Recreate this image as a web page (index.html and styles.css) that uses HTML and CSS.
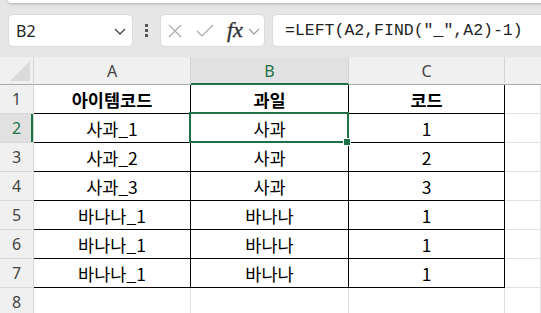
FILE: index.html
```html
<!DOCTYPE html>
<html lang="ko">
<head>
<meta charset="utf-8">
<link rel="stylesheet" href="styles.css">
</head>
<body>
<div class="top">
  <div class="ribbon"></div>
  <div class="bar">
    <div class="namebox">
      <span class="ref">B2</span>
      <svg class="chev" width="12" height="7" viewBox="0 0 12 7"><path d="M1 1 L6 6 L11 1" fill="none" stroke="#444" stroke-width="1.3"/></svg>
    </div>
    <div class="dots"><i></i><i></i><i></i></div>
    <div class="fxbox">
      <svg class="ico" width="14" height="14" viewBox="0 0 14 14"><path d="M1 1 L13 13 M13 1 L1 13" stroke="#aaa" stroke-width="1.2" fill="none"/></svg>
      <svg class="ico check" width="18" height="14" viewBox="0 0 18 14"><path d="M1 7 L6 12 L17 1" stroke="#aaa" stroke-width="1.2" fill="none"/></svg>
      <span class="fx">fx</span>
      <svg class="chev2" width="12" height="7" viewBox="0 0 12 7"><path d="M1 1 L6 6 L11 1" fill="none" stroke="#999" stroke-width="1.1"/></svg>
    </div>
    <div class="formula">=LEFT(A2,FIND("_",A2)-1)</div>
  </div>
</div>
<div class="sheet">
  <div class="corner"><span class="tri"></span></div>
  <div class="ch">A</div>
  <div class="ch sel">B</div>
  <div class="ch">C</div>
  <div class="ch last"></div>

  <div class="rh">1</div>
  <div class="c t b">아이템코드</div>
  <div class="c t b">과일</div>
  <div class="c t b">코드</div>
  <div class="c"></div>

  <div class="rh rsel">2</div>
  <div class="c t">사과_1</div>
  <div class="c t active">사과<span class="outline"></span><span class="handle"></span></div>
  <div class="c t">1</div>
  <div class="c"></div>

  <div class="rh">3</div>
  <div class="c t">사과_2</div>
  <div class="c t">사과</div>
  <div class="c t">2</div>
  <div class="c"></div>

  <div class="rh">4</div>
  <div class="c t">사과_3</div>
  <div class="c t">사과</div>
  <div class="c t">3</div>
  <div class="c"></div>

  <div class="rh">5</div>
  <div class="c t">바나나_1</div>
  <div class="c t">바나나</div>
  <div class="c t">1</div>
  <div class="c"></div>

  <div class="rh">6</div>
  <div class="c t">바나나_1</div>
  <div class="c t">바나나</div>
  <div class="c t">1</div>
  <div class="c"></div>

  <div class="rh">7</div>
  <div class="c t">바나나_1</div>
  <div class="c t">바나나</div>
  <div class="c t">1</div>
  <div class="c"></div>

  <div class="rh">8</div>
  <div class="c"></div>
  <div class="c"></div>
  <div class="c"></div>
  <div class="c"></div>
</div>
</body>
</html>
```

FILE: styles.css
```css
* { box-sizing: border-box; }
html, body { margin: 0; padding: 0; }
body {
  width: 541px;
  height: 313px;
  overflow: hidden;
  background: #fff;
  font-family: "Noto Sans", "Noto Sans CJK KR", sans-serif;
}
.top {
  height: 57px;
  background: #e6e6e6;
  overflow: hidden;
}
.ribbon {
  height: 3px;
  margin-left: 8px;
  margin-right: -10px;
  background: #fff;
  border-radius: 0 0 7px 7px;
  box-shadow: 0 1px 3px rgba(0,0,0,0.25);
}
.bar {
  display: flex;
  align-items: center;
  height: 33px;
  margin-top: 11px;
  padding-left: 8px;
}
.namebox {
  width: 125px;
  height: 33px;
  background: #fff;
  border-radius: 5px;
  border: 1px solid #dcdcdc;
  display: flex;
  align-items: center;
  justify-content: space-between;
  padding: 0 6px 0 7px;
}
.ref {
  font-size: 16px;
  color: #222;
}
.chev { margin-top: 1px; }
.dots {
  width: 27px;
  display: flex;
  flex-direction: column;
  align-items: center;
  gap: 2px;
}
.dots i {
  display: block;
  width: 3px;
  height: 3px;
  background: #555;
}
.fxbox {
  width: 105px;
  height: 33px;
  background: #fff;
  border-radius: 5px;
  border: 1px solid #dcdcdc;
  display: flex;
  align-items: center;
  padding-left: 7px;
}
.ico { margin-right: 14px; }
.check { margin-right: 13px; }
.fx {
  font-family: "Liberation Serif", "DejaVu Serif", serif;
  font-style: italic;
  font-size: 22px;
  color: #333;
  margin-right: 5px;
  line-height: 1;
  margin-top: -2px;
  -webkit-text-stroke: 0.4px #333;
}
.chev2 { margin-top: 1px; }
.formula {
  flex: 1;
  margin-left: 7px;
  margin-right: -10px;
  height: 33px;
  background: #fff;
  border-radius: 5px;
  border: 1px solid #dcdcdc;
  display: flex;
  align-items: center;
  padding-left: 12px;
  font-family: "Liberation Mono", "DejaVu Sans Mono", monospace;
  font-size: 16.5px;
  color: #222;
}
.sheet {
  display: grid;
  grid-template-columns: 34px 157px 158px 156px 1fr;
  grid-template-rows: 28px repeat(8, 29px);
}
.corner {
  background: #f0f0f0;
  border-right: 1px solid #d4d4d4;
  border-bottom: 1px solid #ababab;
  position: relative;
}
.tri {
  position: absolute;
  right: 3px;
  bottom: 3px;
  width: 0;
  height: 0;
  border-left: 20px solid transparent;
  border-bottom: 20px solid #dadada;
}
.ch {
  background: #f0f0f0;
  border-right: 1px solid #d4d4d4;
  border-bottom: 1px solid #ababab;
  display: flex;
  align-items: center;
  justify-content: center;
  font-size: 16px;
  color: #444;
}
.ch.sel {
  background: #e1e1e1;
  color: #1e7145;
  border-bottom: 2px solid #1e7145;
  padding-top: 1px;
}
.ch.last { border-right: none; }
.rh {
  background: #f0f0f0;
  border-right: 1px solid #d4d4d4;
  border-bottom: 1px solid #d9d9d9;
  display: flex;
  align-items: center;
  justify-content: center;
  font-size: 16px;
  color: #444;
}
.rh.rsel {
  background: #e1e1e1;
  color: #1e7145;
  box-shadow: inset -2px 0 0 #1e7145;
}
.c {
  border-right: 1px solid #e1e1e1;
  border-bottom: 1px solid #e1e1e1;
}
.c.t {
  border-right: 1px solid #000;
  border-bottom: 1px solid #000;
  display: flex;
  align-items: center;
  justify-content: center;
  font-family: "Noto Sans CJK KR", sans-serif;
  font-size: 17.5px;
  color: #000;
}
.c.b { font-weight: bold; }
.active { position: relative; }
.outline {
  position: absolute;
  top: -2px;
  left: -2px;
  right: -1px;
  bottom: -1px;
  border: 2px solid #1e7145;
}
.handle {
  position: absolute;
  right: -2px;
  bottom: -3px;
  width: 6px;
  height: 6px;
  background: #1e7145;
  outline: 1px solid #fff;
}
```
